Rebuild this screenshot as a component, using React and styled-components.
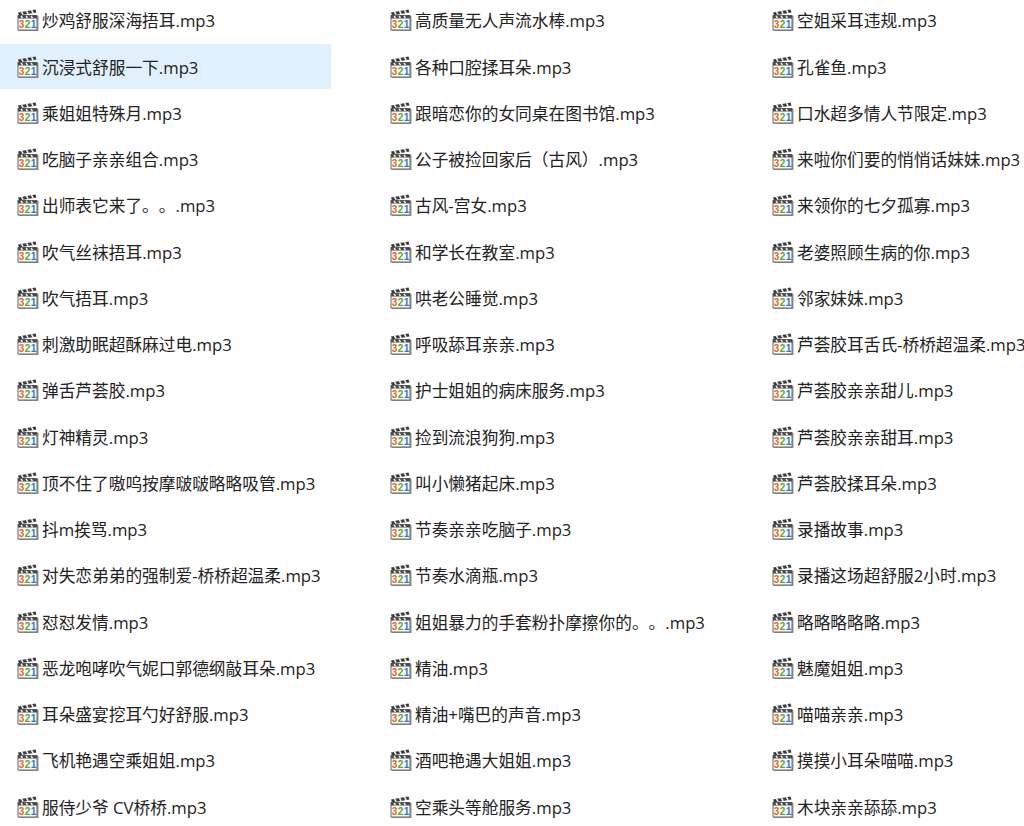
import React from 'react';
import styled, { createGlobalStyle } from 'styled-components';

const GlobalStyle = createGlobalStyle`
  html, body {
    margin: 0;
    height: 100%;
    overflow: hidden;
    background: #fff;
  }
`;

const Page = styled.div`
  display: grid;
  grid-template-columns: 373px 382px 269px;
  width: 1024px;
  height: 826px;
  margin-top: -2px;
  overflow: hidden;
  font-family: "Open Sans", "Noto Sans CJK SC", sans-serif;
  font-size: 16.7px;
  color: #222;
  text-spacing-trim: space-all;
`;

const Column = styled.div`
  display: grid;
  grid-auto-rows: 46.25px;
  min-width: 0;
`;

const Row = styled.div`
  display: flex;
  align-items: center;
  gap: 3px;
  width: 331px;
  height: 44.5px;
  padding-left: 17px;
  box-sizing: border-box;
  white-space: nowrap;
  background: ${({ $selected }) => ($selected ? '#e1f0fd' : 'transparent')};
`;

const Icon = styled.svg`
  flex: none;
  width: 22px;
  height: 22px;
`;

const Digit = styled.text`
  font-family: "Liberation Sans", sans-serif;
  font-size: 10px;
  font-weight: 700;
  fill: ${({ $color }) => $color};
`;

// Media Player Classic 风格的场记板图标
const ClapIcon = () => (
  <Icon viewBox="0 0 22 22">
    <rect x="2" y="7" width="19.5" height="15" fill="#9a9a9a" />
    <rect x="1" y="6.5" width="19" height="14.5" fill="#fbfbfb" stroke="#666" strokeWidth="1" />
    <path d="M1 3.5 L18.5 0.5 L19.5 3.5 L2 6.5 Z" fill="#3a3a3a" />
    <path d="M4.5 2.9 l1.6 2.8 M9.5 2 l1.6 2.8 M14.5 1.2 l1.6 2.8" stroke="#f0f0f0" strokeWidth="1.6" />
    <rect x="1" y="6.5" width="19" height="3" fill="#4a4a4a" />
    <path d="M4 7 l1.5 2 M9 7 l1.5 2 M14 7 l1.5 2" stroke="#f0f0f0" strokeWidth="1.4" />
    <Digit x="1.8" y="19" $color="#dc6a2c">3</Digit>
    <Digit x="7.8" y="19" $color="#5fa337">2</Digit>
    <Digit x="13.8" y="19" $color="#3478c4">1</Digit>
  </Icon>
);

const columns = [
  ['炒鸡舒服深海捂耳', '沉浸式舒服一下', '乘姐姐特殊月', '吃脑子亲亲组合', '出师表它来了。。', '吹气丝袜捂耳', '吹气捂耳', '刺激助眠超酥麻过电', '弹舌芦荟胶', '灯神精灵', '顶不住了嗷呜按摩啵啵略略吸管', '抖m挨骂', '对失恋弟弟的强制爱-桥桥超温柔', '怼怼发情', '恶龙咆哮吹气妮口郭德纲敲耳朵', '耳朵盛宴挖耳勺好舒服', '飞机艳遇空乘姐姐', '服侍少爷 CV桥桥'],
  ['高质量无人声流水棒', '各种口腔揉耳朵', '跟暗恋你的女同桌在图书馆', '公子被捡回家后（古风）', '古风-宫女', '和学长在教室', '哄老公睡觉', '呼吸舔耳亲亲', '护士姐姐的病床服务', '捡到流浪狗狗', '叫小懒猪起床', '节奏亲亲吃脑子', '节奏水滴瓶', '姐姐暴力的手套粉扑摩擦你的。。', '精油', '精油+嘴巴的声音', '酒吧艳遇大姐姐', '空乘头等舱服务'],
  ['空姐采耳违规', '孔雀鱼', '口水超多情人节限定', '来啦你们要的悄悄话妹妹', '来领你的七夕孤寡', '老婆照顾生病的你', '邻家妹妹', '芦荟胶耳舌氏-桥桥超温柔', '芦荟胶亲亲甜儿', '芦荟胶亲亲甜耳', '芦荟胶揉耳朵', '录播故事', '录播这场超舒服2小时', '略略略略略', '魅魔姐姐', '喵喵亲亲', '摸摸小耳朵喵喵', '木块亲亲舔舔'],
];

const App = () => (
  <>
    <GlobalStyle />
    <Page>
      {columns.map((names, c) => (
        <Column key={c}>
          {names.map((name, r) => (
            <Row key={name} $selected={c === 0 && r === 1}>
              <ClapIcon />
              <span>{name}.mp3</span>
            </Row>
          ))}
        </Column>
      ))}
    </Page>
  </>
);

export default App;
